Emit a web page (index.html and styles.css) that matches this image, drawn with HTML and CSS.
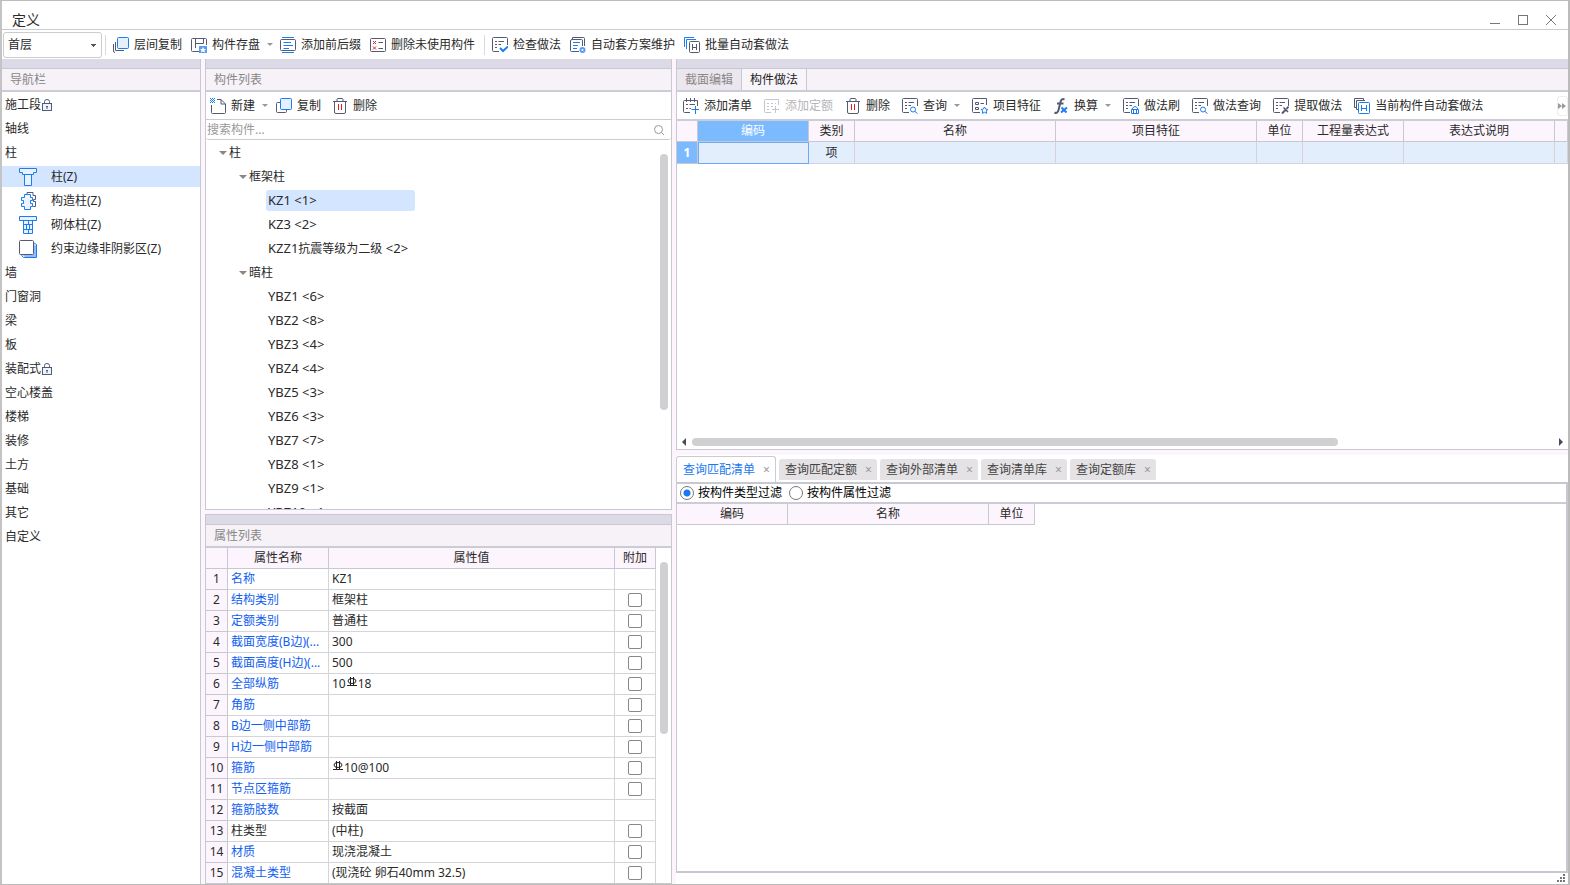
FILE: index.html
```
<!DOCTYPE html>
<html lang="zh-CN">
<head>
<meta charset="utf-8">
<title>定义</title>
<link rel="stylesheet" href="styles.css">
</head>
<body>
<svg class="defs" aria-hidden="true">
  <symbol id="copy-floor" viewBox="0 0 16 16"><path d="M2.500 5V13.500H11M.5 7V14Q.5 15.500 2 15.500" class="d"/><rect x="4.500" y=".5" width="11" height="11" rx="1" class="b f"/></symbol>
  <symbol id="save" viewBox="0 0 16 16"><path d="M8 14.500H1.500Q.5 14.500 .5 13.500V2.500Q.5 1.500 1.500 1.500H14.500Q15.500 1.500 15.500 2.500V8M4.500 1.500V11M4.500 6.500H12.500V2" class="d"/><path d="M8 9h8v7H8z" class="bf2"/><path d="M12 10l1 2h2l-1.500 1.500.5 2-2-1-2 1 .5-2L9 12h2z" fill="#fff"/></symbol>
  <symbol id="lines" viewBox="0 0 16 16"><rect x=".5" y="2.500" width="15" height="11" rx="1" class="d"/><path d="M2 .5H14M2 15.500H14" class="b"/><path d="M3.500 5.500H11M3.500 8.500H13M3.500 11.500H9" class="b"/></symbol>
  <symbol id="del-unused" viewBox="0 0 16 16"><rect x=".5" y="1.500" width="15" height="13" rx="1" class="d"/><path d="M3 4l3 3m0-3L3 7M3 9.500l3 3m0-3l-3 3" class="r"/><path d="M8.500 5.500H13M8.500 11.500H13" class="d"/></symbol>
  <symbol id="sheet" viewBox="0 0 16 16"><path d="M7 14.500H1.500Q.5 14.500 .5 13.500V1.500Q.5 .5 1.500 .5H14.500Q15.500 .5 15.500 1.500V8M3 4.500H5M6.500 4.500H12M3 7.500H5M6.500 7.500H9M3 10.500H5" class="d"/></symbol>
  <symbol id="check" viewBox="0 0 16 16"><use href="#sheet"/><path d="M8 11l3 3 5-4.500" class="b w"/></symbol>
  <symbol id="scheme" viewBox="0 0 16 16"><path d="M9 14.500H1.500Q.5 14.500 .5 13.500V4Q.5 2.500 2 2.500H11.500Q12.500 2.500 12.500 4V9M2.500 2V.5H13.500Q14.500 .5 14.500 1.500V9" class="d"/><path d="M3 5.500H10M3 8.500H8M3 11.500H7" class="b"/><circle cx="12.500" cy="13" r="3" class="bf2"/><circle cx="12.500" cy="13" r="1" fill="#fff"/></symbol>
  <symbol id="batch" viewBox="0 0 16 16"><path d="M.5 10V.5H10M2.500 12V2.500H12" class="b"/><rect x="5.500" y="4.500" width="10" height="11" rx="1" class="d w0"/><path d="M8.500 7V13M12.500 7V13M8.500 10.500H12.500" class="d"/></symbol>
  <symbol id="new" viewBox="0 0 16 16"><path d="M7 1.500H11L15.500 6V14.500Q15.500 15.500 14.500 15.500H2.500Q1.500 15.500 1.500 14.500V7M11 1.500V6H15" class="d"/><path d="M0 .5H1M2 .5H3M4 .5H5M1 1.500H2M3 1.500H4M0 2.500H1M2 2.500H3M4 2.500H5M1 3.500H2M3 3.500H4M0 4.500H1M2 4.500H3M4 4.500H5" class="b"/></symbol>
  <symbol id="copy" viewBox="0 0 16 16"><path d="M4 4.500H1.500Q.5 4.500 .5 5.500V13.500Q.5 14.500 1.500 14.500H9.500Q10.500 14.500 10.500 13.500V12" class="d"/><rect x="4.500" y=".5" width="11" height="11" rx="1" class="b f"/></symbol>
  <symbol id="trash" viewBox="0 0 16 16"><path d="M1 3.500H15M5 3V1.500Q5 .5 6 .5H10Q11 .5 11 1.500V3M2.500 4V14Q2.500 15.500 4 15.500H12Q13.500 15.500 13.500 14V4" class="d"/><path d="M6.500 6V12M9.500 6V12" class="r"/></symbol>
  <symbol id="add" viewBox="0 0 16 16"><path d="M7 14.500H1.500Q.5 14.500 .5 13.500V3.500Q.5 2.500 1.500 2.500H14.500V8M3.500 0V4M7.500 0V4M11.500 0V4M3 6.500H5M6.500 6.500H12M3 10.500H5M6.500 10.500H8" class="d"/><path d="M8.500 11.500H16M12.500 8V16" class="b"/></symbol>
  <symbol id="add-off" viewBox="0 0 16 16"><path d="M7 14.500H1.500Q.5 14.500 .5 13.500V2.500Q.5 1.500 1.500 1.500H14.500V7M3 5.500H5M7 5.500H9M11 5.500H12M3 8.500H5M7 8.500H9M3 11.500H5M8 11.500H15M11.500 8V15" class="g"/></symbol>
  <symbol id="query" viewBox="0 0 16 16"><use href="#sheet"/><circle cx="11" cy="11.500" r="2.500" class="b"/><path d="M13 13.500l2.500 2" class="b"/></symbol>
  <symbol id="feature" viewBox="0 0 16 16"><path d="M8 14.500H1.500Q.5 14.500 .5 13.500V1.500Q.5 .5 1.500 .5H14.500V7M3.500 4.500H6.500V6.500H3.500zM3.500 9.500H6.500V11.500H3.500zM8.500 5.500H12" class="d"/><path d="M12.500 9l1.200 2.100 2.100.3-1.500 1.600.3 2.300-2.100-1-2.100 1 .3-2.300-1.500-1.600 2.100-.3z" class="b"/></symbol>
  <symbol id="fx" viewBox="0 0 16 16"><path d="M11.500 1.500Q8.500 0 7.500 4L5.500 12Q4.500 16 1.500 14.500M4 5.500H10.500" class="d w"/><path d="M8.500 9.500l5 5M14 9.500L8 14.500" class="b w"/></symbol>
  <symbol id="brush" viewBox="0 0 16 16"><use href="#sheet"/><path d="M8.500 15.500V11.500H15.500V15.500zM9 11Q12 6 15 11M10.500 12V15M13.500 12V15" class="b"/></symbol>
  <symbol id="extract" viewBox="0 0 16 16"><use href="#sheet"/><path d="M9 15.500l4-4" class="d w"/><path d="M11 9l4.500 4.500-1 1L10 10z" fill="#4a5068"/><path d="M13.500 11l2-2.500" class="d w"/></symbol>
  <symbol id="current" viewBox="0 0 16 16"><path d="M2 9.500H.5V.5H9.500V2M4 11.500H2.500V2.500H11" class="d"/><rect x="4.500" y="4.500" width="11" height="11" rx="1" class="b w0"/><path d="M7.500 7V13M12.500 7V13M7.500 10.500H12.500" class="b"/></symbol>
  <symbol id="lock" viewBox="0 0 10 12"><rect x=".5" y="4.500" width="9" height="7" class="d f3"/><path d="M2.500 4V2.500Q2.500 .5 5 .5T7.500 2.500V4M5 7V10M4 7.500H6" class="d"/></symbol>
  <symbol id="column" viewBox="0 0 18 18"><path d="M.5 .5H17.500V4.500H14.500V6.500H3.500V4.500H.5zM5.500 6.500H12.500V17.500H5.500z" class="b w1"/></symbol>
  <symbol id="struct" viewBox="0 0 18 18"><path d="M8 2V.5H14V3.500H16.500V7.500H14.500V9.500H16.500V14.500H14" class="d"/><path d="M5.500 2.500H11.500V5.500H13.500V8.500H11.500V11.500H13.500V14.500H11.500V17.500H5.500V14.500H2.500V11.500H4.500V8.500H2.500V5.500H5.500z" class="b f3"/></symbol>
  <symbol id="masonry" viewBox="0 0 18 18"><path d="M.5 .5H17.500V4.500H.5zM4.500 4.500H13.500V17.500H4.500zM4.500 8.500H13.500M4.500 13.500H13.500M9.500 5V8M7.500 9V13M10.500 9V13M9.500 14V17" class="b w1"/></symbol>
  <symbol id="edge" viewBox="0 0 18 18"><path d="M3 14l3 3h11V6l-2-2v10z" class="bf3"/><path d="M2 14.500l2.500 3H17.500V4.500L15 3" class="b"/><rect x=".5" y=".5" width="14" height="14" rx="1" class="d w0"/></symbol>
  <symbol id="rebar" viewBox="0 0 10 10"><ellipse cx="5" cy="4" rx="4" ry="2.500" class="n"/><path d="M3.500 0V9M6.500 0V9M0 8.500H10" class="n"/></symbol>
</svg>

<div class="window">
  <header class="titlebar">
    <h1>定义</h1>
    <div class="winbtns">
      <button aria-label="最小化"><svg viewBox="0 0 12 12"><path d="M1 9.500H11" class="k"/></svg></button>
      <button aria-label="最大化"><svg viewBox="0 0 12 12"><rect x="1.500" y="1.500" width="9" height="9" class="k"/></svg></button>
      <button aria-label="关闭"><svg viewBox="0 0 12 12"><path d="M1 1l10 10M11 1L1 11" class="k"/></svg></button>
    </div>
  </header>

  <div class="toolbar main-tools">
    <select class="floor" aria-label="楼层"><option>首层</option></select>
    <span class="sep"></span>
    <button class="tool"><svg class="ic"><use href="#copy-floor"/></svg>层间复制</button>
    <button class="tool drop"><svg class="ic"><use href="#save"/></svg>构件存盘</button>
    <button class="tool"><svg class="ic"><use href="#lines"/></svg>添加前后缀</button>
    <button class="tool"><svg class="ic"><use href="#del-unused"/></svg>删除未使用构件</button>
    <span class="sep"></span>
    <button class="tool"><svg class="ic"><use href="#check"/></svg>检查做法</button>
    <button class="tool"><svg class="ic"><use href="#scheme"/></svg>自动套方案维护</button>
    <button class="tool"><svg class="ic"><use href="#batch"/></svg>批量自动套做法</button>
  </div>

  <main class="work">
    <nav class="panel side">
      <div class="band"></div>
      <h2 class="head">导航栏</h2>
      <ul class="nav">
        <li>施工段<svg class="lock"><use href="#lock"/></svg></li>
        <li>轴线</li>
        <li>柱</li>
        <li class="sub on"><svg class="ty"><use href="#column"/></svg>柱(Z)</li>
        <li class="sub"><svg class="ty"><use href="#struct"/></svg>构造柱(Z)</li>
        <li class="sub"><svg class="ty"><use href="#masonry"/></svg>砌体柱(Z)</li>
        <li class="sub"><svg class="ty"><use href="#edge"/></svg>约束边缘非阴影区(Z)</li>
        <li>墙</li>
        <li>门窗洞</li>
        <li>梁</li>
        <li>板</li>
        <li>装配式<svg class="lock"><use href="#lock"/></svg></li>
        <li>空心楼盖</li>
        <li>楼梯</li>
        <li>装修</li>
        <li>土方</li>
        <li>基础</li>
        <li>其它</li>
        <li>自定义</li>
      </ul>
    </nav>

    <div class="middle">
      <section class="panel list">
        <div class="band"></div>
        <h2 class="head">构件列表</h2>
        <div class="toolbar list-tools">
          <button class="tool drop"><svg class="ic"><use href="#new"/></svg>新建</button>
          <button class="tool"><svg class="ic"><use href="#copy"/></svg>复制</button>
          <button class="tool"><svg class="ic"><use href="#trash"/></svg>删除</button>
        </div>
        <div class="search">
          <input type="text" placeholder="搜索构件..." aria-label="搜索构件">
          <svg viewBox="0 0 12 12"><circle cx="5.500" cy="5.500" r="4" class="k2"/><path d="M8.500 8.500l2.500 2.500" class="k2"/></svg>
        </div>
        <div class="scroller">
          <ul class="tree">
            <li class="l1">柱</li>
            <li class="l2">框架柱</li>
            <li class="l3 on"><span class="en">KZ1 &lt;1&gt;</span></li>
            <li class="l3"><span class="en">KZ3 &lt;2&gt;</span></li>
            <li class="l3"><span class="en">KZZ1</span>抗震等级为二级<span class="en"> &lt;2&gt;</span></li>
            <li class="l2">暗柱</li>
            <li class="l3"><span class="en">YBZ1 &lt;6&gt;</span></li>
            <li class="l3"><span class="en">YBZ2 &lt;8&gt;</span></li>
            <li class="l3"><span class="en">YBZ3 &lt;4&gt;</span></li>
            <li class="l3"><span class="en">YBZ4 &lt;4&gt;</span></li>
            <li class="l3"><span class="en">YBZ5 &lt;3&gt;</span></li>
            <li class="l3"><span class="en">YBZ6 &lt;3&gt;</span></li>
            <li class="l3"><span class="en">YBZ7 &lt;7&gt;</span></li>
            <li class="l3"><span class="en">YBZ8 &lt;1&gt;</span></li>
            <li class="l3"><span class="en">YBZ9 &lt;1&gt;</span></li>
            <li class="l3"><span class="en">YBZ10 &lt;1&gt;</span></li>
          </ul>
          <div class="vbar tree-bar"><i></i></div>
        </div>
      </section>

      <section class="panel props">
        <div class="band"></div>
        <h2 class="head">属性列表</h2>
        <div class="scroller">
          <table class="grid prop">
            <colgroup><col class="c22"><col class="c101"><col><col class="c41"></colgroup>
            <thead><tr><th></th><th>属性名称</th><th>属性值</th><th>附加</th></tr></thead>
            <tbody>
              <tr><th>1</th><td>名称</td><td>KZ1</td><td></td></tr>
              <tr><th>2</th><td>结构类别</td><td>框架柱</td><td><input type="checkbox" aria-label="结构类别"></td></tr>
              <tr><th>3</th><td>定额类别</td><td>普通柱</td><td><input type="checkbox" aria-label="定额类别"></td></tr>
              <tr><th>4</th><td>截面宽度(B边)(...</td><td>300</td><td><input type="checkbox" aria-label="截面宽度"></td></tr>
              <tr><th>5</th><td>截面高度(H边)(...</td><td>500</td><td><input type="checkbox" aria-label="截面高度"></td></tr>
              <tr><th>6</th><td>全部纵筋</td><td>10<svg class="rebar"><use href="#rebar"/></svg>18</td><td><input type="checkbox" aria-label="全部纵筋"></td></tr>
              <tr><th>7</th><td>角筋</td><td></td><td><input type="checkbox" aria-label="角筋"></td></tr>
              <tr><th>8</th><td>B边一侧中部筋</td><td></td><td><input type="checkbox" aria-label="B边一侧中部筋"></td></tr>
              <tr><th>9</th><td>H边一侧中部筋</td><td></td><td><input type="checkbox" aria-label="H边一侧中部筋"></td></tr>
              <tr><th>10</th><td>箍筋</td><td><svg class="rebar"><use href="#rebar"/></svg>10@100</td><td><input type="checkbox" aria-label="箍筋"></td></tr>
              <tr><th>11</th><td>节点区箍筋</td><td></td><td><input type="checkbox" aria-label="节点区箍筋"></td></tr>
              <tr><th>12</th><td>箍筋肢数</td><td>按截面</td><td></td></tr>
              <tr><th>13</th><td class="plain">柱类型</td><td>(中柱)</td><td><input type="checkbox" aria-label="柱类型"></td></tr>
              <tr><th>14</th><td>材质</td><td>现浇混凝土</td><td><input type="checkbox" aria-label="材质"></td></tr>
              <tr><th>15</th><td>混凝土类型</td><td>(现浇砼 卵石40mm 32.5)</td><td><input type="checkbox" aria-label="混凝土类型"></td></tr>
            </tbody>
          </table>
          <div class="vbar prop-bar"><i></i></div>
        </div>
      </section>
    </div>

    <div class="right">
      <section class="panel method">
        <div class="band"></div>
        <div class="head tabs"><button>截面编辑</button><button class="on">构件做法</button></div>
        <div class="toolbar method-tools">
          <button class="tool"><svg class="ic"><use href="#add"/></svg>添加清单</button>
          <button class="tool" disabled><svg class="ic"><use href="#add-off"/></svg>添加定额</button>
          <button class="tool"><svg class="ic"><use href="#trash"/></svg>删除</button>
          <button class="tool drop"><svg class="ic"><use href="#query"/></svg>查询</button>
          <button class="tool"><svg class="ic"><use href="#feature"/></svg>项目特征</button>
          <button class="tool drop"><svg class="ic"><use href="#fx"/></svg>换算</button>
          <button class="tool"><svg class="ic"><use href="#brush"/></svg>做法刷</button>
          <button class="tool"><svg class="ic"><use href="#query"/></svg>做法查询</button>
          <button class="tool"><svg class="ic"><use href="#extract"/></svg>提取做法</button>
          <button class="tool"><svg class="ic"><use href="#current"/></svg>当前构件自动套做法</button>
          <button class="more" aria-label="更多"><svg viewBox="0 0 8 6"><path d="M0 0l4 3-4 3zM4 0l4 3-4 3z" fill="#999"/></svg></button>
        </div>
        <div class="sheet">
          <table class="grid items">
            <colgroup><col class="c21"><col class="c111"><col class="c46"><col class="c201"><col class="c201"><col class="c46"><col class="c101"><col class="c151"><col></colgroup>
            <thead><tr><th></th><th class="on">编码</th><th>类别</th><th>名称</th><th>项目特征</th><th>单位</th><th>工程量表达式</th><th>表达式说明</th><th></th></tr></thead>
            <tbody><tr><th>1</th><td class="edit"></td><td>项</td><td></td><td></td><td></td><td></td><td></td><td></td></tr></tbody>
          </table>
        </div>
        <div class="hbar">
          <svg viewBox="0 0 4 8"><path d="M4 0v8L0 4z" fill="#444c5c"/></svg>
          <div class="track"><i></i></div>
          <svg viewBox="0 0 4 8"><path d="M0 0v8l4-4z" fill="#444c5c"/></svg>
        </div>
      </section>

      <section class="lookup">
        <div class="qtabs">
          <button class="on">查询匹配清单<i>×</i></button>
          <button>查询匹配定额<i>×</i></button>
          <button>查询外部清单<i>×</i></button>
          <button>查询清单库<i>×</i></button>
          <button>查询定额库<i>×</i></button>
        </div>
        <div class="result">
          <div class="filters">
            <label><input type="radio" name="filter" checked>按构件类型过滤</label>
            <label><input type="radio" name="filter">按构件属性过滤</label>
          </div>
          <table class="grid match">
            <colgroup><col class="c111"><col class="c201"><col class="c46"></colgroup>
            <thead><tr><th>编码</th><th>名称</th><th>单位</th></tr></thead>
          </table>
        </div>
      </section>
      <footer class="status"><svg viewBox="0 0 8 8"><path d="M6 0h2v2H6zM3 3h2v2H3zM6 3h2v2H6zM0 6h2v2H0zM3 6h2v2H3zM6 6h2v2H6z" fill="#777"/></svg></footer>
    </div>
  </main>
</div>
</body>
</html>
```
FILE: styles.css
```
* { box-sizing: border-box; }
body {
  margin: 0;
  font: 12px/20px "Noto Sans", "Noto Sans CJK SC", sans-serif;
  color: #2a2a2a;
  background: #fff;
}
button, input, select { font: inherit; color: inherit; }
button { background: none; border: 0; padding: 0; white-space: nowrap; }
ul { list-style: none; margin: 0; padding: 0; }
h1, h2 { margin: 0; font-weight: 400; font-size: 12px; }
.defs { position: absolute; width: 0; height: 0; }

.d, .b, .r, .g, .k, .k2, .n { fill: none; stroke-width: 1; }
.d { stroke: #555a72; }
.b { stroke: #1f7bf0; }
.r { stroke: #e02020; }
.g { stroke: #c8c4cc; }
.k { stroke: #777; }
.k2 { stroke: #999; }
.n { stroke: #222; }
.f { fill: #e4f0ff; }
.f3 { fill: #eef4ff; }
.w { stroke-width: 2; }
.w0 { fill: #fff; }
.w1 { fill: #e8f2ff; }
.bf2 { fill: #5b9bf5; }
.bf3 { fill: #8dbbff; }

.window {
  height: 100vh;
  display: flex;
  flex-direction: column;
  border: 1px solid #bbb;
  border-left: 2px solid #c4c4c4;
  border-right-width: 2px;
}
.titlebar {
  height: 29px;
  flex: none;
  display: flex;
  justify-content: space-between;
  align-items: flex-end;
  border-bottom: 1px solid #c8ccd0;
  padding: 0 11px 0 10px;
}
.titlebar h1 { font-size: 14px; line-height: 18px; }
.winbtns { display: flex; gap: 16px; padding-bottom: 3px; }
.winbtns svg { width: 12px; height: 12px; display: block; }

.toolbar { display: flex; align-items: center; flex: none; background: #fff; overflow: hidden; }
.tool { display: flex; align-items: center; gap: 5px; flex: none; }
.tool:disabled { color: #b8b4bc; }
.ic { width: 16px; height: 16px; flex: none; }
.drop::after {
  content: "";
  border: 3px solid transparent;
  border-top-color: #999;
  border-bottom: 0;
  margin-left: 2px;
}
.sep { width: 1px; height: 20px; background: #ddd8e0; }
.main-tools { height: 29px; gap: 9px; padding-left: 1px; }
.main-tools .sep { margin-right: -2px; }
.main-tools .drop { margin-right: -2px; }
.floor {
  appearance: none;
  width: 99px;
  height: 26px;
  margin-right: -6px;
  padding: 0 4px;
  border: 1px solid #ccc;
  border-radius: 3px;
  background:
    linear-gradient(#555, #555) no-repeat right 5px top 11px / 5px 1px,
    linear-gradient(#555, #555) no-repeat right 6px top 12px / 3px 1px,
    linear-gradient(#555, #555) no-repeat right 7px top 13px / 1px 1px,
    #fff;
}

.work {
  flex: 1;
  min-height: 0;
  display: grid;
  grid-template-columns: 199px 467px minmax(0, 1fr);
  gap: 4px;
  background: #fdf5fd;
}
.panel { background: #fff; border: 1px solid #c8c8d0; border-top: 0; display: flex; flex-direction: column; min-height: 0; }
.side { border-left: 0; border-bottom: 0; }
.band { height: 9px; flex: none; background: #dcdae6; }
.head {
  height: 24px;
  flex: none;
  line-height: 21px;
  padding-left: 8px;
  color: #888;
  background: #f6f2f7;
  border-top: 1px solid #c8c8d0;
  border-bottom: 2px solid #ccccd4;
}
.nav { padding-top: 2px; overflow: hidden; }
.nav li { height: 21px; margin-bottom: 3px; padding-left: 3px; display: flex; align-items: center; }
.nav .sub { padding-left: 17px; gap: 14px; }
.ty { width: 18px; height: 18px; }
.lock { width: 10px; height: 12px; margin-left: 1px; }
.on { background: #d3e5ff; }

.middle { display: grid; grid-template-rows: 451px minmax(0, 1fr); gap: 4px; min-height: 0; }
.props { border-top: 1px solid #c8c8d0; }
.list-tools { height: 28px; gap: 11px; padding-left: 4px; border-bottom: 1px solid #c8ccd0; }
.list-tools .drop { margin-right: -3px; }
.search { height: 20px; flex: none; display: flex; align-items: center; border-bottom: 1px solid #c8ccd0; border-radius: 3px; padding-right: 6px; }
.search input { flex: 1; border: 0; outline: 0; padding: 0 1px; height: 18px; background: none; }
.search input::placeholder { color: #999; }
.search svg { width: 12px; height: 12px; }
.scroller { flex: 1; min-height: 0; display: flex; overflow: hidden; }
.tree { flex: 1; padding-top: 2px; }
.tree li { height: 21px; margin-bottom: 3px; line-height: 21px; }
.tree .l1 { padding-left: 13px; }
.tree .l2 { padding-left: 33px; }
.tree .l3 { margin-left: 60px; padding-left: 2px; }
.tree .l1::before, .tree .l2::before {
  content: "";
  display: inline-block;
  border: 4px solid transparent;
  border-top-color: #888;
  border-bottom: 0;
  margin-right: 2px;
  vertical-align: 2px;
}
.tree .on { width: 149px; border-radius: 3px; }
.en { font-size: 13px; line-height: 20px; white-space: pre; }
.vbar { width: 15px; flex: none; display: flex; justify-content: center; }
.vbar i { width: 8px; border-radius: 4px; background: #d0d0d2; }
.tree-bar { padding-top: 14px; }
.tree-bar i { height: 256px; }
.prop-bar { padding-top: 14px; }
.prop-bar i { height: 172px; }

.grid { border-collapse: separate; border-spacing: 0; table-layout: fixed; }
.grid th, .grid td { height: 21px; padding: 0 3px; line-height: 20px; border-right: 1px solid #d4d4da; border-bottom: 1px solid #d4d4da; font-weight: 400; white-space: nowrap; overflow: hidden; }
.grid th { padding: 0; text-align: center; background: #fdf5fd; border-color: #c8c8d0; }
.c21 { width: 21px; }
.c22 { width: 22px; }
.c41 { width: 41px; }
.c46 { width: 46px; }
.c101 { width: 101px; }
.c111 { width: 111px; }
.c151 { width: 151px; }
.c201 { width: 201px; }
.prop { flex: 1; min-width: 0; height: 0; }
.prop td:nth-child(2) { color: #1060f0; }
.prop td.plain { color: #2a2a2a; }
.prop input { appearance: none; display: block; width: 14px; height: 14px; margin: 0 auto; border: 1px solid #888; border-radius: 2px; background: #fff; }
.rebar { width: 10px; height: 10px; margin: 0 1px; vertical-align: 1px; }

.right { display: flex; flex-direction: column; min-height: 0; min-width: 0; }
.method { height: 391px; flex: none; border-right: 0; }
.tabs { display: flex; padding-left: 0; }
.tabs button { width: 65px; border-right: 1px solid #c8c8d0; background: #ece6ee; }
.tabs .on { background: #f8f5fa; color: #222; }
.method-tools { height: 29px; gap: 12px; padding-left: 6px; border-bottom: 2px solid #ccccd4; }
.more { margin-left: auto; width: 11px; height: 20px; border: 1px solid #eee; border-radius: 3px; }
.more svg { width: 8px; height: 6px; display: block; }
.sheet { flex: 1; overflow: hidden; }
.items { width: 100%; }
.items td { background: #e3eefd; text-align: center; height: 22px; }
.items thead .on { background: #7cbaff; color: #fff; }
.items tbody th { background: #7cbaff; color: #fff; font-weight: 700; }
.items .edit { border: 1px solid #6aaaf8; }
.hbar { height: 15px; flex: none; display: flex; align-items: center; gap: 6px; padding: 0 5px; }
.hbar svg { width: 4px; height: 8px; }
.track { flex: 1; }
.track i { display: block; width: 75%; height: 8px; border-radius: 4px; background: #d0d0d2; }

.lookup { flex: 1; min-height: 0; display: flex; flex-direction: column; padding-top: 5px; }
.qtabs { height: 27px; flex: none; display: flex; align-items: flex-end; gap: 3px; background: #fff; }
.qtabs button { height: 21px; margin-bottom: 2px; padding: 0 6px; background: #e4e2e4; border-radius: 3px 3px 0 0; color: #444; display: flex; align-items: center; gap: 8px; }
.qtabs .on { height: 26px; margin-bottom: 0; background: #fff; border: 1px solid #ccc; border-bottom: 0; color: #1a78f0; }
.qtabs i { font-style: normal; color: #999; width: 6px; }
.result { flex: 1; min-height: 0; background: #fff; border: 2px solid #c8c8d0; border-left-width: 1px; }
.filters { height: 20px; display: flex; align-items: center; gap: 7px; padding-left: 3px; border-bottom: 2px solid #ccccd4; color: #000; }
.filters label { display: flex; align-items: center; gap: 4px; }
.filters input { appearance: none; width: 14px; height: 14px; margin: 0; border: 1px solid #777; border-radius: 50%; background: #fff; }
.filters input:checked { background: radial-gradient(circle, #1a78f0 3px, #fff 4px); }
.match { width: 358px; }
.status { height: 11px; flex: none; display: flex; justify-content: flex-end; padding: 1px 3px; background: #fff; }
.status svg { width: 8px; height: 8px; }
```
